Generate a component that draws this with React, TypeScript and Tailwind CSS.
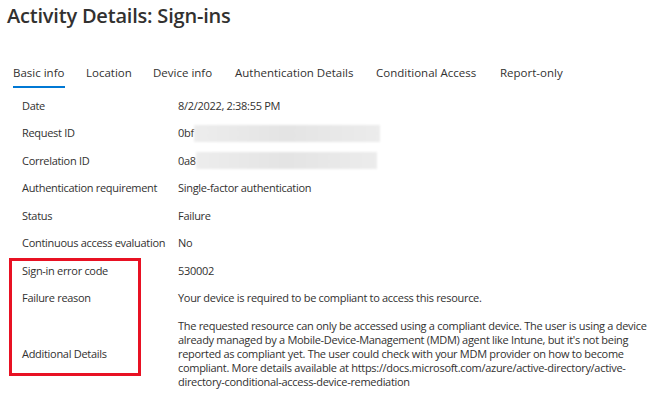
const tabs = [
  { label: "Basic info", w: "w-[73px]" },
  { label: "Location", w: "w-[67px]" },
  { label: "Device info", w: "w-[82px]" },
  { label: "Authentication Details", w: "w-[141px]" },
  { label: "Conditional Access", w: "w-[124px]" },
  { label: "Report-only", w: "w-auto" },
]

function Blur({ prefix, width }: { prefix: string; width: string }) {
  return (
    <span className="flex items-center">
      <span>{prefix}</span>
      <span className={`h-[17px] ${width} bg-gradient-to-r from-[#ededed] via-[#e4e4e4] to-[#ececec] blur-[1px]`} />
    </span>
  )
}

const rows: { label: string; value: React.ReactNode }[] = [
  { label: "Date", value: "8/2/2022, 2:38:55 PM" },
  { label: "Request ID", value: <Blur prefix="0bf" width="w-[186px]" /> },
  { label: "Correlation ID", value: <Blur prefix="0a8" width="w-[181px]" /> },
  { label: "Authentication requirement", value: "Single-factor authentication" },
  { label: "Status", value: "Failure" },
  { label: "Continuous access evaluation", value: "No" },
]

export default function App() {
  return (
    <div className="w-[661px] h-[404px] bg-white text-[#323130] overflow-hidden font-['Open_Sans',sans-serif]">
      {/* Title */}
      <h1 className="pl-[7px] pt-[1px] text-[20px] leading-[30px] font-semibold tracking-[-0.2px]">
        Activity Details: Sign-ins
      </h1>

      {/* Tabs */}
      <div className="mt-[33px] flex pl-[13px] text-[11.5px]">
        {tabs.map((t, i) => (
          <div key={t.label} className={`flex flex-col shrink-0 ${t.w}`}>
            <span className="leading-[18px] self-start">{t.label}</span>
            <span className={i === 0 ? "mt-[4px] h-[2px] w-[52px] bg-[#0078d4]" : "mt-[4px] h-[2px]"} />
          </div>
        ))}
      </div>

      {/* Details */}
      <div className="mt-[4px] pl-[22px] text-[11px] tracking-[-0.3px]">
        {rows.map((r) => (
          <div key={r.label} className="flex h-[27.5px] items-center">
            <span className="w-[156px] shrink-0">{r.label}</span>
            <span>{r.value}</span>
          </div>
        ))}

        <div className="relative">
          <div className="absolute left-[-13px] top-[1px] w-[132px] h-[118px] border-[3px] border-[#e81123]" />
          <div className="flex h-[27.5px] items-center">
            <span className="w-[156px] shrink-0">Sign-in error code</span>
            <span>530002</span>
          </div>
          <div className="flex h-[27.5px] items-center">
            <span className="w-[156px] shrink-0">Failure reason</span>
            <span>Your device is required to be compliant to access this resource.</span>
          </div>
          <div className="flex items-center">
            <span className="w-[156px] shrink-0">Additional Details</span>
            <p className="py-[7px] leading-[14px] whitespace-nowrap">
              The requested resource can only be accessed using a compliant device. The user is using a device
              <br />
              already managed by a Mobile-Device-Management (MDM) agent like Intune, but it's not being
              <br />
              reported as compliant yet. The user could check with your MDM provider on how to become
              <br />
              compliant. More details available at https://docs.microsoft.com/azure/active-directory/active-
              <br />
              directory-conditional-access-device-remediation
            </p>
          </div>
        </div>
      </div>
    </div>
  )
}
